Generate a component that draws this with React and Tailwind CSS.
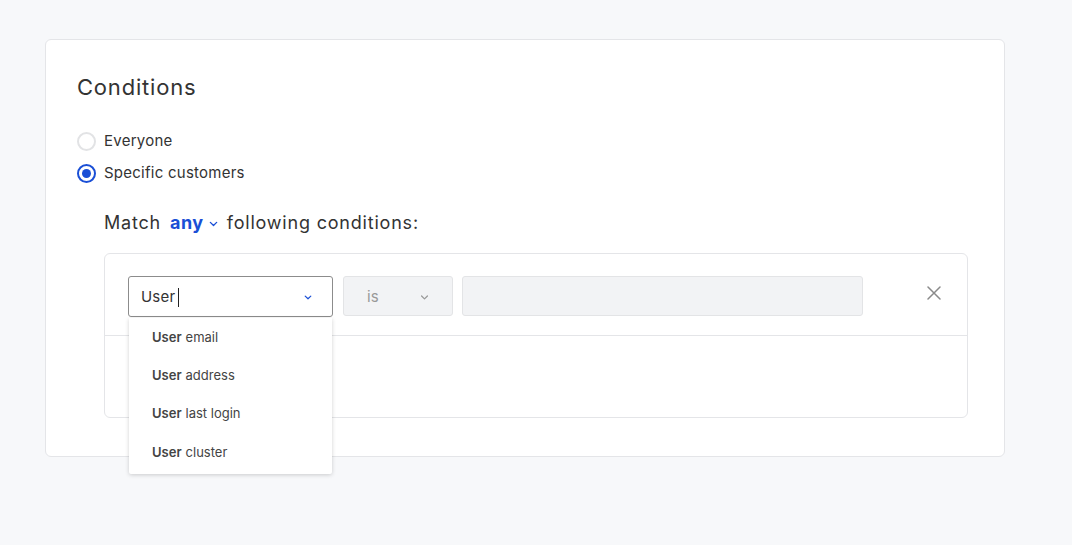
import React from "react";

function Chevron({ className }) {
  return (
    <svg className={className} viewBox="0 0 10 6" fill="none" stroke="currentColor" strokeWidth="1.5" strokeLinecap="round" strokeLinejoin="round">
      <path d="M1.5 1.2 L5 4.6 L8.5 1.2" />
    </svg>
  );
}

export default function App() {
  const items = ["email", "address", "last login", "cluster"];
  return (
    <div className="min-h-[545px] w-[1072px] bg-[#f7f8fa] pt-[39px] pl-[45px]" style={{ fontFamily: "Inter, 'Noto Sans', sans-serif" }}>
      <div className="w-[960px] h-[418px] bg-white border border-[#e4e5e8] rounded-[6px] pl-[31px] pt-[33px]">
        <h2 className="text-[22px] leading-[28px] text-[#333] font-normal tracking-[0.8px]">Conditions</h2>
        <div className="mt-[30px] flex flex-col gap-[12px]">
          <label className="flex items-center h-[20px]">
            <span className="w-[19px] h-[19px] rounded-full border-[2px] border-[#e2e3e5] bg-white" />
            <span className="ml-[8px] text-[15px] text-[#333] tracking-[0.25px]">Everyone</span>
          </label>
          <label className="flex items-center h-[20px]">
            <span className="w-[19px] h-[19px] rounded-full border-[2px] border-[#1a4fd6] bg-white flex items-center justify-center">
              <span className="w-[9px] h-[9px] rounded-full bg-[#1a4fd6]" />
            </span>
            <span className="ml-[8px] text-[15px] text-[#333] tracking-[0.25px]">Specific customers</span>
          </label>
        </div>
        <div className="ml-[27px] mt-[27px] flex items-center h-[24px] text-[18px] text-[#333] tracking-[0.8px]">
          <span>Match</span>
          <span className="ml-[9px] font-bold text-[#1a4fd6] tracking-[0.5px]">any</span>
          <Chevron className="ml-[5px] mt-[4px] w-[9px] h-[6px] text-[#1a4fd6]" />
          <span className="ml-[9px]">following conditions:</span>
        </div>
        <div className="ml-[27px] mt-[19px] w-[864px] h-[165px] border border-[#e4e5e8] rounded-[6px]">
          <div className="flex items-start pl-[23px] pt-[22px] h-[82px] border-b border-[#e4e5e8]">
            <div className="relative">
              <div className="w-[205px] h-[41px] border-[1.5px] border-[#8c8c8c] rounded-[3px] flex items-center pl-[12px] pr-[20px] pt-[2px]">
                <span className="text-[15px] text-[#333] tracking-[0.2px]">User</span>
                <span className="ml-[3px] w-[1px] h-[19px] bg-[#222]" />
                <Chevron className="ml-auto w-[8px] h-[5px] text-[#1a4fd6]" />
              </div>
              <div className="absolute left-[1px] top-[42px] w-[203px] h-[156px] bg-white shadow-[0_1px_4px_rgba(0,0,0,0.18)] rounded-b-[2px] z-10 flex flex-col pt-[1px]">
                {items.map((t, i) => (
                  <div key={t} className={i === 3 ? "h-[38px] mt-[1px] flex items-center pl-[23px] text-[13px] text-[#444]" : "h-[38px] flex items-center pl-[23px] text-[13px] text-[#444]"}>
                    <span className="font-semibold">User</span>
                    <span className="ml-[4px]">{t}</span>
                  </div>
                ))}
              </div>
            </div>
            <div className="ml-[10px] w-[110px] h-[40px] bg-[#f2f3f5] border border-[#e3e4e6] rounded-[3px] flex items-center pl-[23px] pr-[23px] pt-[2px]">
              <span className="text-[15px] text-[#999]">is</span>
              <Chevron className="ml-auto w-[9px] h-[5px] text-[#999]" />
            </div>
            <div className="ml-[9px] w-[401px] h-[40px] bg-[#f2f3f5] border border-[#e3e4e6] rounded-[3px]" />
            <svg className="ml-[64px] mt-[10px] w-[14px] h-[14px] text-[#8a8a8a]" viewBox="0 0 14 14" fill="none" stroke="currentColor" strokeWidth="1.5" strokeLinecap="round">
              <path d="M1 1 L13 13 M13 1 L1 13" />
            </svg>
          </div>
        </div>
      </div>
    </div>
  );
}
